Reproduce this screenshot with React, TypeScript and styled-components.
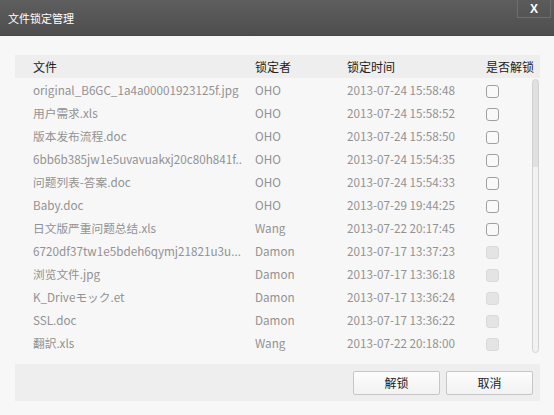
import styled, { createGlobalStyle } from "styled-components";

interface ILockRow {
  file: string;
  owner: string;
  time: string;
  disabled?: boolean;
}

const rows: ILockRow[] = [
  { file: "original_B6GC_1a4a00001923125f.jpg", owner: "OHO", time: "2013-07-24 15:58:48" },
  { file: "用户需求.xls", owner: "OHO", time: "2013-07-24 15:58:52" },
  { file: "版本发布流程.doc", owner: "OHO", time: "2013-07-24 15:58:50" },
  { file: "6bb6b385jw1e5uvavuakxj20c80h841f..", owner: "OHO", time: "2013-07-24 15:54:35" },
  { file: "问题列表-答案.doc", owner: "OHO", time: "2013-07-24 15:54:33" },
  { file: "Baby.doc", owner: "OHO", time: "2013-07-29 19:44:25" },
  { file: "日文版严重问题总结.xls", owner: "Wang", time: "2013-07-22 20:17:45" },
  { file: "6720df37tw1e5bdeh6qymj21821u3u...", owner: "Damon", time: "2013-07-17 13:37:23", disabled: true },
  { file: "浏览文件.jpg", owner: "Damon", time: "2013-07-17 13:36:18", disabled: true },
  { file: "K_Driveモック.et", owner: "Damon", time: "2013-07-17 13:36:24", disabled: true },
  { file: "SSL.doc", owner: "Damon", time: "2013-07-17 13:36:22", disabled: true },
  { file: "翻訳.xls", owner: "Wang", time: "2013-07-22 20:18:00", disabled: true },
];

const GlobalStyle = createGlobalStyle`
  html, body {
    margin: 0;
    padding: 0;
    background: #f7f7f7;
  }
  body {
    font-family: "Noto Sans CJK SC", "Liberation Sans", sans-serif;
    font-size: 12px;
  }
`;

const Dialog = styled.div`
  width: 554px;
  height: 415px;
  display: flex;
  flex-direction: column;
  background: #f7f7f7;
  overflow: hidden;
`;

const TitleBar = styled.div`
  height: 36px;
  flex-shrink: 0;
  display: flex;
  align-items: flex-start;
  background: linear-gradient(#5e5e5e, #4e4e4e);
  border-bottom: 1px solid #484848;
  box-sizing: border-box;
`;

const Title = styled.div`
  color: #ffffff;
  font-size: 11px;
  line-height: 36px;
  padding-left: 8px;
`;

const CloseButton = styled.div`
  margin-left: auto;
  margin-right: 3px;
  width: 34px;
  height: 18px;
  box-sizing: border-box;
  border: 1px solid #6e6e6e;
  border-top: none;
  background: linear-gradient(#5b5b5b, #545454);
  display: flex;
  align-items: center;
  justify-content: center;
  color: #ffffff;
  font-family: "Liberation Sans", sans-serif;
  font-weight: bold;
  font-size: 12px;
`;

const Body = styled.div`
  padding: 19px 14px 0 15px;
  display: flex;
  flex-direction: column;
`;

const Grid = styled.div`
  display: grid;
  grid-template-columns: 222px 92px 139px 1fr;
  align-items: center;
  padding-left: 18px;
  height: 23px;
`;

const HeaderRow = styled(Grid)`
  background: #eeeeee;
  color: #222222;
`;

const ListArea = styled.div`
  display: flex;
`;

const List = styled.div`
  width: 517px;
`;

const Cell = styled.div`
  color: #929292;
  font-size: 11.7px;
  white-space: nowrap;
  overflow: hidden;
`;

const Check = styled.div<{ $disabled?: boolean }>`
  width: 13px;
  height: 13px;
  box-sizing: border-box;
  border-radius: 3px;
  margin-top: 3px;
  border: 1px solid ${(p) => (p.$disabled ? "#dadada" : "#a0a0a0")};
  background: ${(p) => (p.$disabled ? "#e4e4e4" : "#f9f9f9")};
`;

const ScrollTrack = styled.div`
  width: 7px;
  height: 274px;
  margin-top: 1px;
  box-sizing: border-box;
  border: 1px solid #d2d2d2;
  border-radius: 4px;
  background: linear-gradient(#e0e0e0 0 32%, #f2f2f2 32% 100%);
`;

const Footer = styled.div`
  margin-top: 10px;
  height: 37px;
  width: 525px;
  background: #eeeeee;
  display: flex;
  align-items: center;
  justify-content: flex-end;
  gap: 6px;
  padding-right: 7px;
  box-sizing: border-box;
`;

const Button = styled.div`
  width: 87px;
  height: 24px;
  box-sizing: border-box;
  border: 1px solid #c6c6c6;
  border-radius: 2px;
  background: linear-gradient(#fdfdfd, #f2f2f2);
  display: flex;
  align-items: center;
  justify-content: center;
  color: #222222;
  font-size: 12px;
`;

export default function App() {
  return (
    <Dialog>
      <GlobalStyle />
      <TitleBar>
        <Title>文件锁定管理</Title>
        <CloseButton>X</CloseButton>
      </TitleBar>
      <Body>
        <HeaderRow>
          <div>文件</div>
          <div>锁定者</div>
          <div>锁定时间</div>
          <div>是否解锁</div>
        </HeaderRow>
        <ListArea>
          <List>
            {rows.map((row) => (
              <Grid key={row.file}>
                <Cell>{row.file}</Cell>
                <Cell>{row.owner}</Cell>
                <Cell>{row.time}</Cell>
                <Check $disabled={row.disabled} />
              </Grid>
            ))}
          </List>
          <ScrollTrack />
        </ListArea>
        <Footer>
          <Button>解锁</Button>
          <Button>取消</Button>
        </Footer>
      </Body>
    </Dialog>
  );
}
